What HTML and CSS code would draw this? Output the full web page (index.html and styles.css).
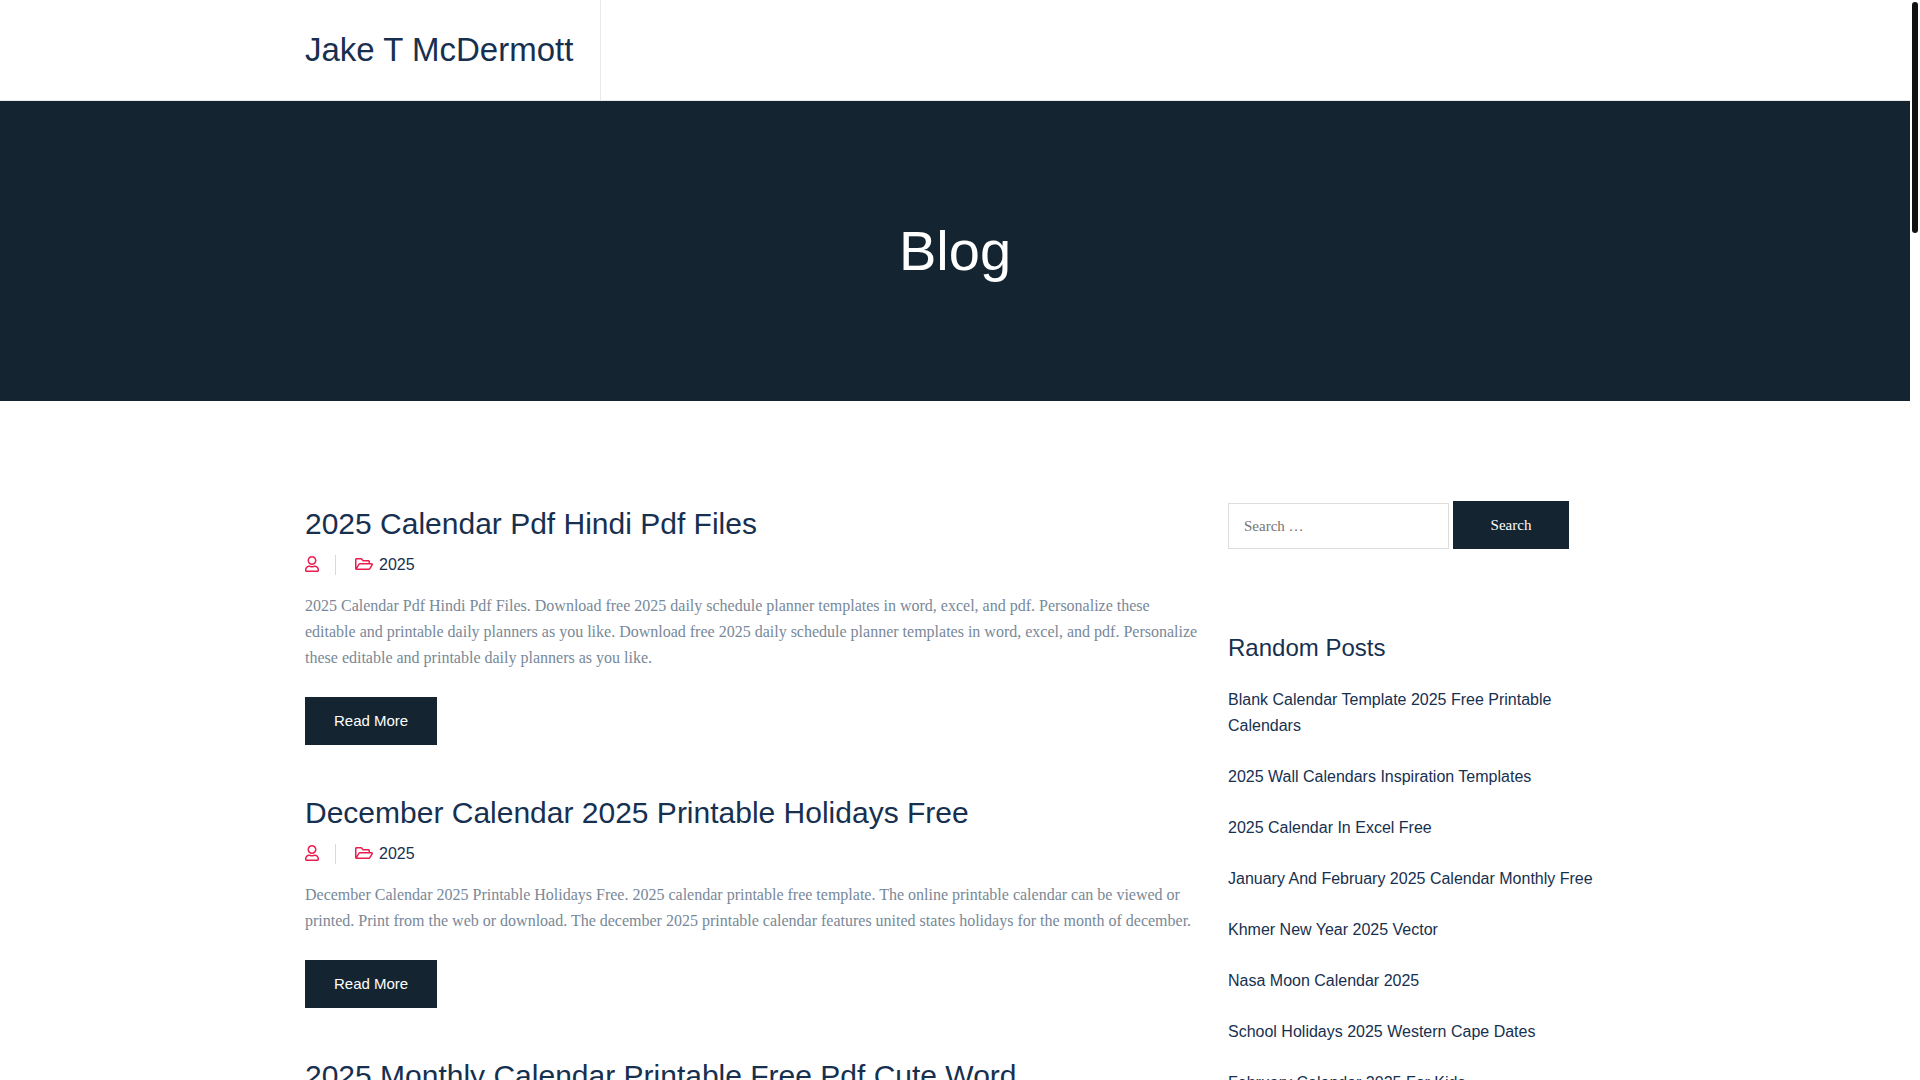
FILE: index.html
```html
<!DOCTYPE html>
<html lang="en">
<head>
    <meta charset="UTF-8">
    <meta name="viewport" content="width=device-width, initial-scale=1">
    <title>Blog - Jake T McDermott</title>
    <link rel="stylesheet" href="styles.css">
</head>
<body>
    <!-- icons used in the post meta -->
    <svg class="icon-defs" aria-hidden="true">
        <symbol id="icon-user" viewBox="0 0 448 512">
            <path d="M313.6 304c-28.700 0-42.500 16-89.600 16-47.100 0-60.800-16-89.600-16C60.200 304 0 364.200 0 438.400V464c0 26.500 21.500 48 48 48h352c26.500 0 48-21.500 48-48v-25.600c0-74.200-60.200-134.400-134.400-134.400zM400 464H48v-25.600c0-47.600 38.800-86.400 86.400-86.400 14.600 0 38.300 16 89.600 16 51.700 0 74.900-16 89.600-16 47.600 0 86.400 38.800 86.400 86.400V464zM224 288c79.500 0 144-64.500 144-144S303.500 0 224 0 80 64.500 80 144s64.500 144 144 144zm0-240c52.900 0 96 43.100 96 96s-43.100 96-96 96-96-43.100-96-96 43.100-96 96-96z"/>
        </symbol>
        <symbol id="icon-folder" viewBox="0 0 576 512">
            <path d="M527.900 224H480v-48c0-26.500-21.500-48-48-48H272l-64-64H48C21.500 64 0 85.500 0 112v288c0 26.500 21.500 48 48 48h400c16.500 0 31.900-8.500 40.700-22.600l79.900-128c20-31.900-3-73.400-40.700-73.400zM48 118c0-3.300 2.700-6 6-6h134.100l64 64H426c3.300 0 6 2.700 6 6v42H152c-16.800 0-32.400 8.800-41.100 23.200L48 351.400zm400 282H72l77.200-128H528z"/>
        </symbol>
    </svg>

    <header class="site-header">
        <div class="container">
            <a class="site-title" href="#">Jake T McDermott</a>
        </div>
    </header>

    <div class="banner">
        <h1>Blog</h1>
    </div>

    <div class="container content">
        <main class="posts">
            <article class="post">
                <h2><a href="#">2025 Calendar Pdf Hindi Pdf Files</a></h2>
                <div class="meta">
                    <span class="author"><svg class="icon icon-user"><use href="#icon-user"/></svg></span>
                    <span class="category"><svg class="icon icon-folder"><use href="#icon-folder"/></svg><a href="#">2025</a></span>
                </div>
                <p>2025 Calendar Pdf Hindi Pdf Files. Download free 2025 daily schedule planner templates in word, excel, and pdf. Personalize these editable and printable daily planners as you like. Download free 2025 daily schedule planner templates in word, excel, and pdf. Personalize these editable and printable daily planners as you like.</p>
                <a class="read-more" href="#">Read More</a>
            </article>

            <article class="post">
                <h2><a href="#">December Calendar 2025 Printable Holidays Free</a></h2>
                <div class="meta">
                    <span class="author"><svg class="icon icon-user"><use href="#icon-user"/></svg></span>
                    <span class="category"><svg class="icon icon-folder"><use href="#icon-folder"/></svg><a href="#">2025</a></span>
                </div>
                <p>December Calendar 2025 Printable Holidays Free. 2025 calendar printable free template. The online printable calendar can be viewed or printed. Print from the web or download. The december 2025 printable calendar features united states holidays for the month of december.</p>
                <a class="read-more" href="#">Read More</a>
            </article>

            <article class="post">
                <h2><a href="#">2025 Monthly Calendar Printable Free Pdf Cute Word</a></h2>
            </article>
        </main>

        <aside class="sidebar">
            <form class="search-form" role="search">
                <input type="search" aria-label="Search for:" placeholder="Search …">
                <button type="submit">Search</button>
            </form>

            <section class="widget">
                <h3>Random Posts</h3>
                <ul>
                    <li><a href="#">Blank Calendar Template 2025 Free Printable Calendars</a></li>
                    <li><a href="#">2025 Wall Calendars Inspiration Templates</a></li>
                    <li><a href="#">2025 Calendar In Excel Free</a></li>
                    <li><a href="#">January And February 2025 Calendar Monthly Free</a></li>
                    <li><a href="#">Khmer New Year 2025 Vector</a></li>
                    <li><a href="#">Nasa Moon Calendar 2025</a></li>
                    <li><a href="#">School Holidays 2025 Western Cape Dates</a></li>
                    <li><a href="#">February Calendar 2025 For Kids</a></li>
                </ul>
            </section>
        </aside>
    </div>

    <div class="scroll-rail"><div class="scroll-thumb"></div></div>
</body>
</html>
```
FILE: styles.css
```css
* { box-sizing: border-box; }
html { scrollbar-width: none; }
body { margin: 0; padding-right: 10px; background: #fff; color: #788898; font: 16px/26px "Liberation Serif", serif; }
a { color: #17304f; text-decoration: none; }
h1, h2, h3 { margin: 0; font-family: "Liberation Sans", sans-serif; font-weight: 400; color: #17304f; }
.icon-defs { display: none; }
.container { max-width: 1300px; margin: 0 auto; }

.site-header { border-bottom: 1px solid #e9e9e9; }
.site-title { display: inline-block; padding-right: 27px; border-right: 1px solid #e9e9e9; font: 33px/100px "Liberation Sans", sans-serif; vertical-align: top; }

.banner { display: flex; align-items: center; justify-content: center; height: 300px; background: #142430; }
.banner h1 { color: #fff; font-size: 56px; line-height: 66px; }

.content { display: grid; grid-template-columns: minmax(0, 1fr) 377px; gap: 26px; padding: 100px 0; }

.post { margin-bottom: 45px; }
.post h2 { font-size: 30px; line-height: 45px; }
.meta { display: flex; align-items: center; margin: 8px 0 17px; line-height: 22px; font-family: "Liberation Sans", sans-serif; }
.author { display: flex; align-items: center; height: 20px; padding-right: 16px; margin-right: 19px; border-right: 1px solid #d9d9d9; }
.category { display: flex; align-items: center; gap: 6px; }
.icon { display: block; height: 16px; margin-bottom: 2px; fill: #e91e4f; }
.icon-user { width: 14px; }
.icon-folder { width: 18px; }
.post p { margin: 0 0 26px; }
.read-more { display: inline-block; padding: 0 29px; background: #142430; color: #fff; font: 15px/48px "Liberation Sans", sans-serif; vertical-align: top; }

.search-form { display: flex; align-items: flex-end; gap: 4px; }
.search-form input { width: 221px; height: 46px; padding: 0 15px; border: 1px solid #ddd; background: #fff; font: 15px "Liberation Serif", serif; appearance: none; }
.search-form input::placeholder { color: #757575; }
.search-form button { width: 116px; height: 48px; padding: 0; border: 0; background: #142430; color: #fff; font: 15px "Liberation Serif", serif; cursor: pointer; }

.widget { margin-top: 81px; }
.widget h3 { font-size: 24px; line-height: 36px; }
.widget ul { margin: 21px 0 0; padding: 0; list-style: none; }
.widget li { margin-bottom: 25px; font-family: "Liberation Sans", sans-serif; }

/* slim page scrollbar */
.scroll-rail { position: fixed; top: 0; right: 0; bottom: 0; width: 10px; padding: 2px; background: #fff; }
.scroll-thumb { width: 6px; height: 231px; border-radius: 3px; background: #111; }
```
